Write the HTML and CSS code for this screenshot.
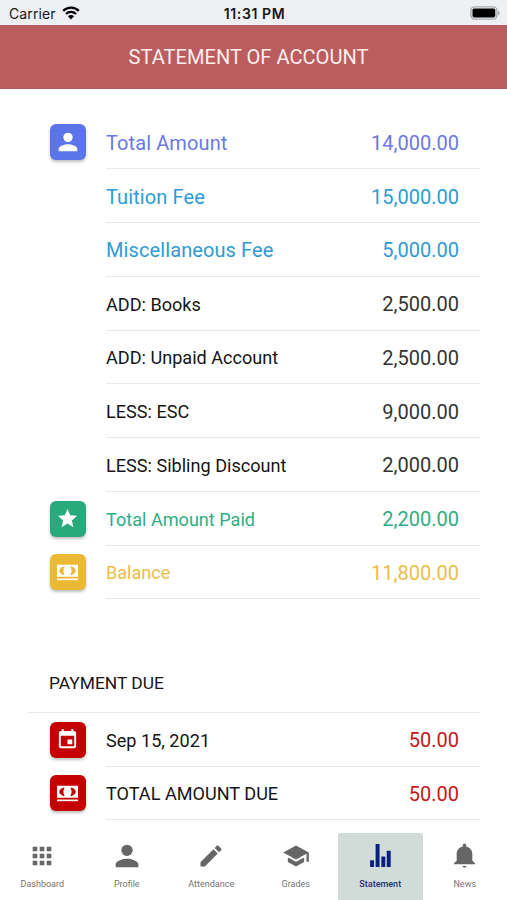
FILE: index.html
```html
<!DOCTYPE html>
<html lang="en">

<head>
  <meta charset="UTF-8" />
  <meta name="viewport" content="width=device-width, initial-scale=1.0" />
  <link rel="stylesheet" href="styles.css">
  <title>Statement of Account</title>
</head>

<body>
  <svg class="sprite" xmlns="http://www.w3.org/2000/svg">
    <symbol id="person" viewBox="0 0 24 24">
      <circle cx="12" cy="8" r="4" />
      <path d="M12 14c-2.67 0-8 1.34-8 4v2h16v-2c0-2.66-5.33-4-8-4z" />
    </symbol>
    <symbol id="star" viewBox="0 0 24 24">
      <path d="M12 17.27L18.18 21l-1.64-7.03L22 9.24l-7.19-.61L12 2 9.19 8.63 2 9.24l5.46 4.73L5.82 21z" />
    </symbol>
    <symbol id="cash" viewBox="0 0 24 24">
      <path fill-rule="evenodd" d="M1 4h22v12.500H1zM7.500 6C5.500 6.500 3.500 8.300 3.300 10.300c.2 2 2.200 3.800 4.200 4.300L9 14.600C7.300 12 7.300 8.600 9 6zM15 6c1.700 2.600 1.700 6 0 8.600h1.500c2-.5 4-2.300 4.200-4.300C20.500 8.300 18.500 6.500 16.500 6z" />
      <path d="M1 18.300h22v1.700H1z" />
    </symbol>
    <symbol id="calendar" viewBox="0 0 24 24">
      <path d="M17 12h-5v5h5v-5zM16 1v2H8V1H6v2H5c-1.110 0-1.990.9-1.990 2L3 19c0 1.100.89 2 2 2h14c1.100 0 2-.9 2-2V5c0-1.100-.9-2-2-2h-1V1h-2zm3 18H5V8h14v11z" />
    </symbol>
    <symbol id="apps" viewBox="0 0 24 24">
      <path d="M4 8h4V4H4zm6 12h4v-4h-4zm-6 0h4v-4H4zm0-6h4v-4H4zm6 0h4v-4h-4zm6-10v4h4V4zm-6 4h4V4h-4zm6 6h4v-4h-4zm0 6h4v-4h-4z" />
    </symbol>
    <symbol id="pencil" viewBox="0 0 24 24">
      <path d="M3 17.250V21h3.750L17.810 9.940l-3.750-3.750L3 17.250zM20.710 7.040c.39-.39.39-1.020 0-1.410l-2.340-2.340c-.39-.39-1.020-.39-1.410 0l-1.830 1.830 3.750 3.750 1.830-1.830z" />
    </symbol>
    <symbol id="school" viewBox="0 0 24 24">
      <path d="M5 13.180v4L12 21l7-3.820v-4L12 17l-7-3.820zM12 3L1 9l11 6 9-4.910V17h2V9L12 3z" />
    </symbol>
    <symbol id="stats" viewBox="0 0 24 24">
      <rect x="2" y="16.500" width="3.800" height="6.500" rx=".5" />
      <rect x="7.300" y="1" width="3.800" height="22" rx=".5" />
      <rect x="12.800" y="13" width="3.800" height="10" rx=".5" />
      <rect x="18" y="7.500" width="3.800" height="15.500" rx=".5" />
    </symbol>
    <symbol id="bell" viewBox="0 0 24 24">
      <path d="M12 23.600c1.100 0 1.900-.6 1.900-1.500h-3.800c0 .9.800 1.500 1.900 1.500zM19.500 17V10.500c0-3.700-2.200-6.300-5.900-7.200V2c0-.8-.7-1.500-1.600-1.500s-1.600.7-1.600 1.500v1.300c-3.700.9-5.900 3.500-5.900 7.200V17L2 19.200v1.100h20v-1.100z" />
    </symbol>
  </svg>

  <div class="status-bar">
    <div class="carrier">
      <span>Carrier</span>
      <svg class="wifi" viewBox="0 0 18 14">
        <path d="M1.200 4.900a11 11 0 0 1 15.600 0M4 8a7 7 0 0 1 10 0" />
        <path class="wifi-dot" d="M9 13.500L5.900 10.300a4.400 4.400 0 0 1 6.200 0z" />
      </svg>
    </div>
    <span class="time">11:31 PM</span>
    <div class="battery-box">
      <svg class="battery" viewBox="0 0 30 14">
        <rect class="battery-case" x=".9" y=".9" width="26" height="12.200" rx="3.500" />
        <rect x="2.500" y="2.500" width="22.800" height="9" rx="1.800" />
        <path class="battery-tip" d="M28 4.500c2.200.8 2.200 4.200 0 5z" />
      </svg>
    </div>
  </div>

  <header>STATEMENT OF ACCOUNT</header>

  <main>
    <ul class="list">
      <li class="row total">
        <div class="icon"><svg class="person"><use href="#person" /></svg></div>
        <div class="line"><span class="large">Total Amount</span><span class="amount">14,000.00</span></div>
      </li>
      <li class="row fee">
        <div class="line"><span class="large">Tuition Fee</span><span class="amount">15,000.00</span></div>
      </li>
      <li class="row fee">
        <div class="line"><span class="large">Miscellaneous Fee</span><span class="amount">5,000.00</span></div>
      </li>
      <li class="row">
        <div class="line"><span>ADD: Books</span><span class="amount">2,500.00</span></div>
      </li>
      <li class="row">
        <div class="line"><span>ADD: Unpaid Account</span><span class="amount">2,500.00</span></div>
      </li>
      <li class="row">
        <div class="line"><span>LESS: ESC</span><span class="amount">9,000.00</span></div>
      </li>
      <li class="row">
        <div class="line"><span>LESS: Sibling Discount</span><span class="amount">2,000.00</span></div>
      </li>
      <li class="row paid">
        <div class="icon"><svg><use href="#star" /></svg></div>
        <div class="line"><span>Total Amount Paid</span><span class="amount">2,200.00</span></div>
      </li>
      <li class="row balance">
        <div class="icon"><svg><use href="#cash" /></svg></div>
        <div class="line"><span>Balance</span><span class="amount">11,800.00</span></div>
      </li>
    </ul>

    <h2>PAYMENT DUE</h2>

    <ul class="list">
      <li class="row due">
        <div class="icon"><svg><use href="#calendar" /></svg></div>
        <div class="line"><span>Sep 15, 2021</span><span class="amount">50.00</span></div>
      </li>
      <li class="row due">
        <div class="icon"><svg><use href="#cash" /></svg></div>
        <div class="line"><span>TOTAL AMOUNT DUE</span><span class="amount">50.00</span></div>
      </li>
    </ul>
  </main>

  <nav>
    <a class="tab"><svg><use href="#apps" /></svg>Dashboard</a>
    <a class="tab"><svg class="profile"><use href="#person" /></svg>Profile</a>
    <a class="tab"><svg><use href="#pencil" /></svg>Attendance</a>
    <a class="tab"><svg><use href="#school" /></svg>Grades</a>
    <a class="tab active"><svg class="stats"><use href="#stats" /></svg>Statement</a>
    <a class="tab"><svg class="bell"><use href="#bell" /></svg>News</a>
  </nav>
</body>

</html>
```
FILE: styles.css
```css
* {
  margin: 0;
  padding: 0;
  box-sizing: border-box;
}

body {
  height: 900px;
  display: flex;
  flex-direction: column;
  overflow: hidden;
  background-color: #fff;
  color: #151515;
  font-family: Roboto, "Liberation Sans", sans-serif;
}

.sprite {
  display: none;
}

.status-bar {
  height: 25px;
  padding: 2px 7px 0 9px;
  display: flex;
  align-items: center;
  background-color: #eff0f4;
  color: #151518;
  font-family: Inter, sans-serif;
  font-size: 14px;
}

.carrier,
.battery-box {
  flex: 1;
  display: flex;
  align-items: center;
}

.carrier {
  letter-spacing: 0.1px;
}

.battery-box {
  justify-content: flex-end;
}

.wifi {
  width: 18px;
  height: 14px;
  margin: -2px 0 0 6px;
  fill: none;
  stroke: #000;
  stroke-width: 2.4;
}

.wifi-dot {
  fill: #000;
  stroke: none;
}

.time {
  font-size: 14px;
  font-weight: 600;
  letter-spacing: 0.6px;
}

.battery {
  width: 30px;
  height: 14px;
  margin-top: -2px;
}

.battery-case {
  fill: none;
  stroke: #aaabad;
  stroke-width: 1.4;
}

.battery-tip {
  fill: #aaabad;
}

header {
  height: 63.5px;
  display: flex;
  align-items: center;
  justify-content: center;
  padding: 1px 10px 0 0;
  background-color: #bb5d5f;
  color: #fdeeed;
  font-size: 20.1px;
}

main {
  padding: 27px 27px 0 28px;
}

.list {
  padding-left: 21.500px;
  list-style: none;
}

.row {
  height: 53.75px;
  display: flex;
  align-items: center;
}

.icon {
  width: 36px;
  height: 36px;
  display: flex;
  flex-shrink: 0;
  align-items: center;
  justify-content: center;
  margin-right: -36px;
  border-radius: 6px;
  box-shadow: 0 2px 3px rgba(0, 0, 0, 0.25);
}

.icon svg {
  width: 23px;
  height: 23px;
  fill: #fff;
}

.icon .person {
  width: 28px;
  height: 28px;
}

.line {
  flex: 1;
  height: 100%;
  display: flex;
  align-items: center;
  justify-content: space-between;
  margin-left: 56.5px;
  padding: 2px 21px 0 0;
  border-bottom: 1px solid #e9e9e9;
  font-size: 18.100px;
}

.large,
.amount {
  font-size: 20px;
}

.large {
  letter-spacing: 0.1px;
}

.amount {
  color: #333;
}

.total span {
  color: #6a78e3;
}

.total .icon {
  background-color: #5b74ea;
}

.fee span {
  color: #2d9bd5;
}

.paid span {
  color: #2fae82;
}

.paid .icon {
  background-color: #29aa7d;
}

.balance span {
  color: #edbd4a;
}

.balance .icon {
  background-color: #ecb934;
}

.due .amount {
  color: #c21818;
}

.due .icon {
  background-color: #c40000;
}

h2 {
  height: 58px;
  display: flex;
  align-items: center;
  margin-top: 55.5px;
  padding-left: 21px;
  border-bottom: 1px solid #e9e9e9;
  font-size: 17.4px;
  font-weight: 400;
}

nav {
  height: 67.5px;
  display: flex;
  margin-top: auto;
}

.tab {
  flex: 1;
  display: flex;
  flex-direction: column;
  align-items: center;
  padding-top: 9px;
  border-radius: 2px 2px 0 0;
  color: #747474;
  font-size: 9px;
}

.tab svg {
  width: 28px;
  height: 28px;
  margin-bottom: 9px;
  fill: #666;
}

.tab .profile {
  width: 34px;
  height: 34px;
  margin: -3px 0 6px;
}

.tab .stats,
.tab .bell {
  width: 25px;
  height: 25px;
  margin: 1px 0 11px;
}

.tab.active {
  background-color: #d1dcd8;
  color: #1c2f78;
  font-weight: 500;
}

.active svg {
  fill: #0a1f7d;
}
```
